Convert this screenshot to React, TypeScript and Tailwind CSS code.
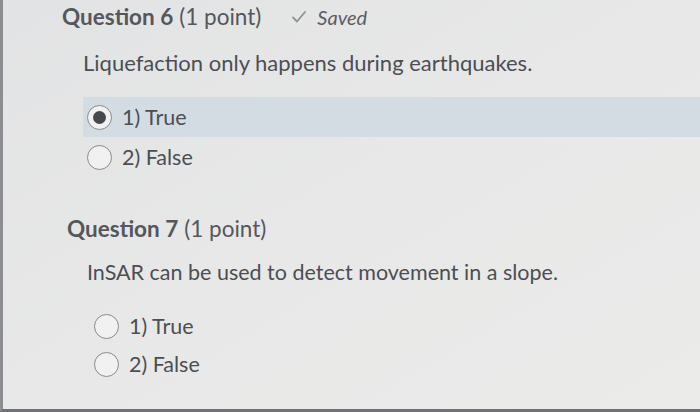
import React from "react";

interface OptionProps {
  label: string;
  checked?: boolean;
  h?: string;
}

const Radio = ({ checked }: { checked?: boolean }) => (
  <span className="flex h-[25px] w-[25px] shrink-0 items-center justify-center rounded-full border-[1.5px] border-[#878a8e] bg-[#f1f1f1]">
    {checked && <span className="h-[13px] w-[13px] rounded-full bg-[#45484d]" />}
  </span>
);

const Option = ({ label, checked, h = "h-[40px]" }: OptionProps) => (
  <div className={`flex items-center gap-[10px] pl-[4px] ${h}`}>
    <Radio checked={checked} />
    <span className="text-[21.5px] text-[#4b4f54]">{label}</span>
  </div>
);

const Check = () => (
  <svg width="16" height="14" viewBox="0 0 16 14" fill="none">
    <path d="M2 7.5 L6 11.5 L14 2" stroke="#8e9196" strokeWidth="1.8" strokeLinecap="round" strokeLinejoin="round" />
  </svg>
);

export default function App() {
  return (
    <div
      className="h-[412px] w-[700px] overflow-hidden border-b-[3px] border-l-[3px] border-b-[#6f7174] border-l-[#8b8d90] bg-gradient-to-br from-[#e2e3e4] via-[#e8e8e8] to-[#ebebea] text-[#4b4f54]"
      style={{ fontFamily: "Lato, 'Open Sans', sans-serif" }}
    >
      <div className="flex flex-col pl-[59px] pt-[3px]">
        <div className="flex h-[28px] items-center">
          <span className="text-[22.5px] font-bold text-[#54575c]">Question 6</span>
          <span className="ml-[6px] text-[22.5px] text-[#54575c]">(1 point)</span>
          <span className="ml-[30px] flex items-center gap-[10px]">
            <Check />
            <span className="text-[20px] italic text-[#5a5d62]">Saved</span>
          </span>
        </div>

        <p className="ml-[21px] mt-[18px] text-[22px] leading-[28px]">
          Liquefaction only happens during earthquakes.
        </p>

        <div className="ml-[21px] mt-[20px] flex flex-col">
          <div className="bg-[#d4dce3]">
            <Option label="1) True" checked />
          </div>
          <Option label="2) False" />
        </div>

        <div className="ml-[5px] mt-[38px] flex h-[28px] items-center">
          <span className="text-[22.5px] font-bold text-[#54575c]">Question 7</span>
          <span className="ml-[6px] text-[22.5px] text-[#54575c]">(1 point)</span>
        </div>

        <p className="ml-[25px] mt-[15px] text-[21.5px] leading-[28px]">
          InSAR can be used to detect movement in a slope.
        </p>

        <div className="ml-[28px] mt-[21px] flex flex-col">
          <Option label="1) True" h="h-[38px]" />
          <Option label="2) False" h="h-[38px]" />
        </div>
      </div>
    </div>
  );
}
